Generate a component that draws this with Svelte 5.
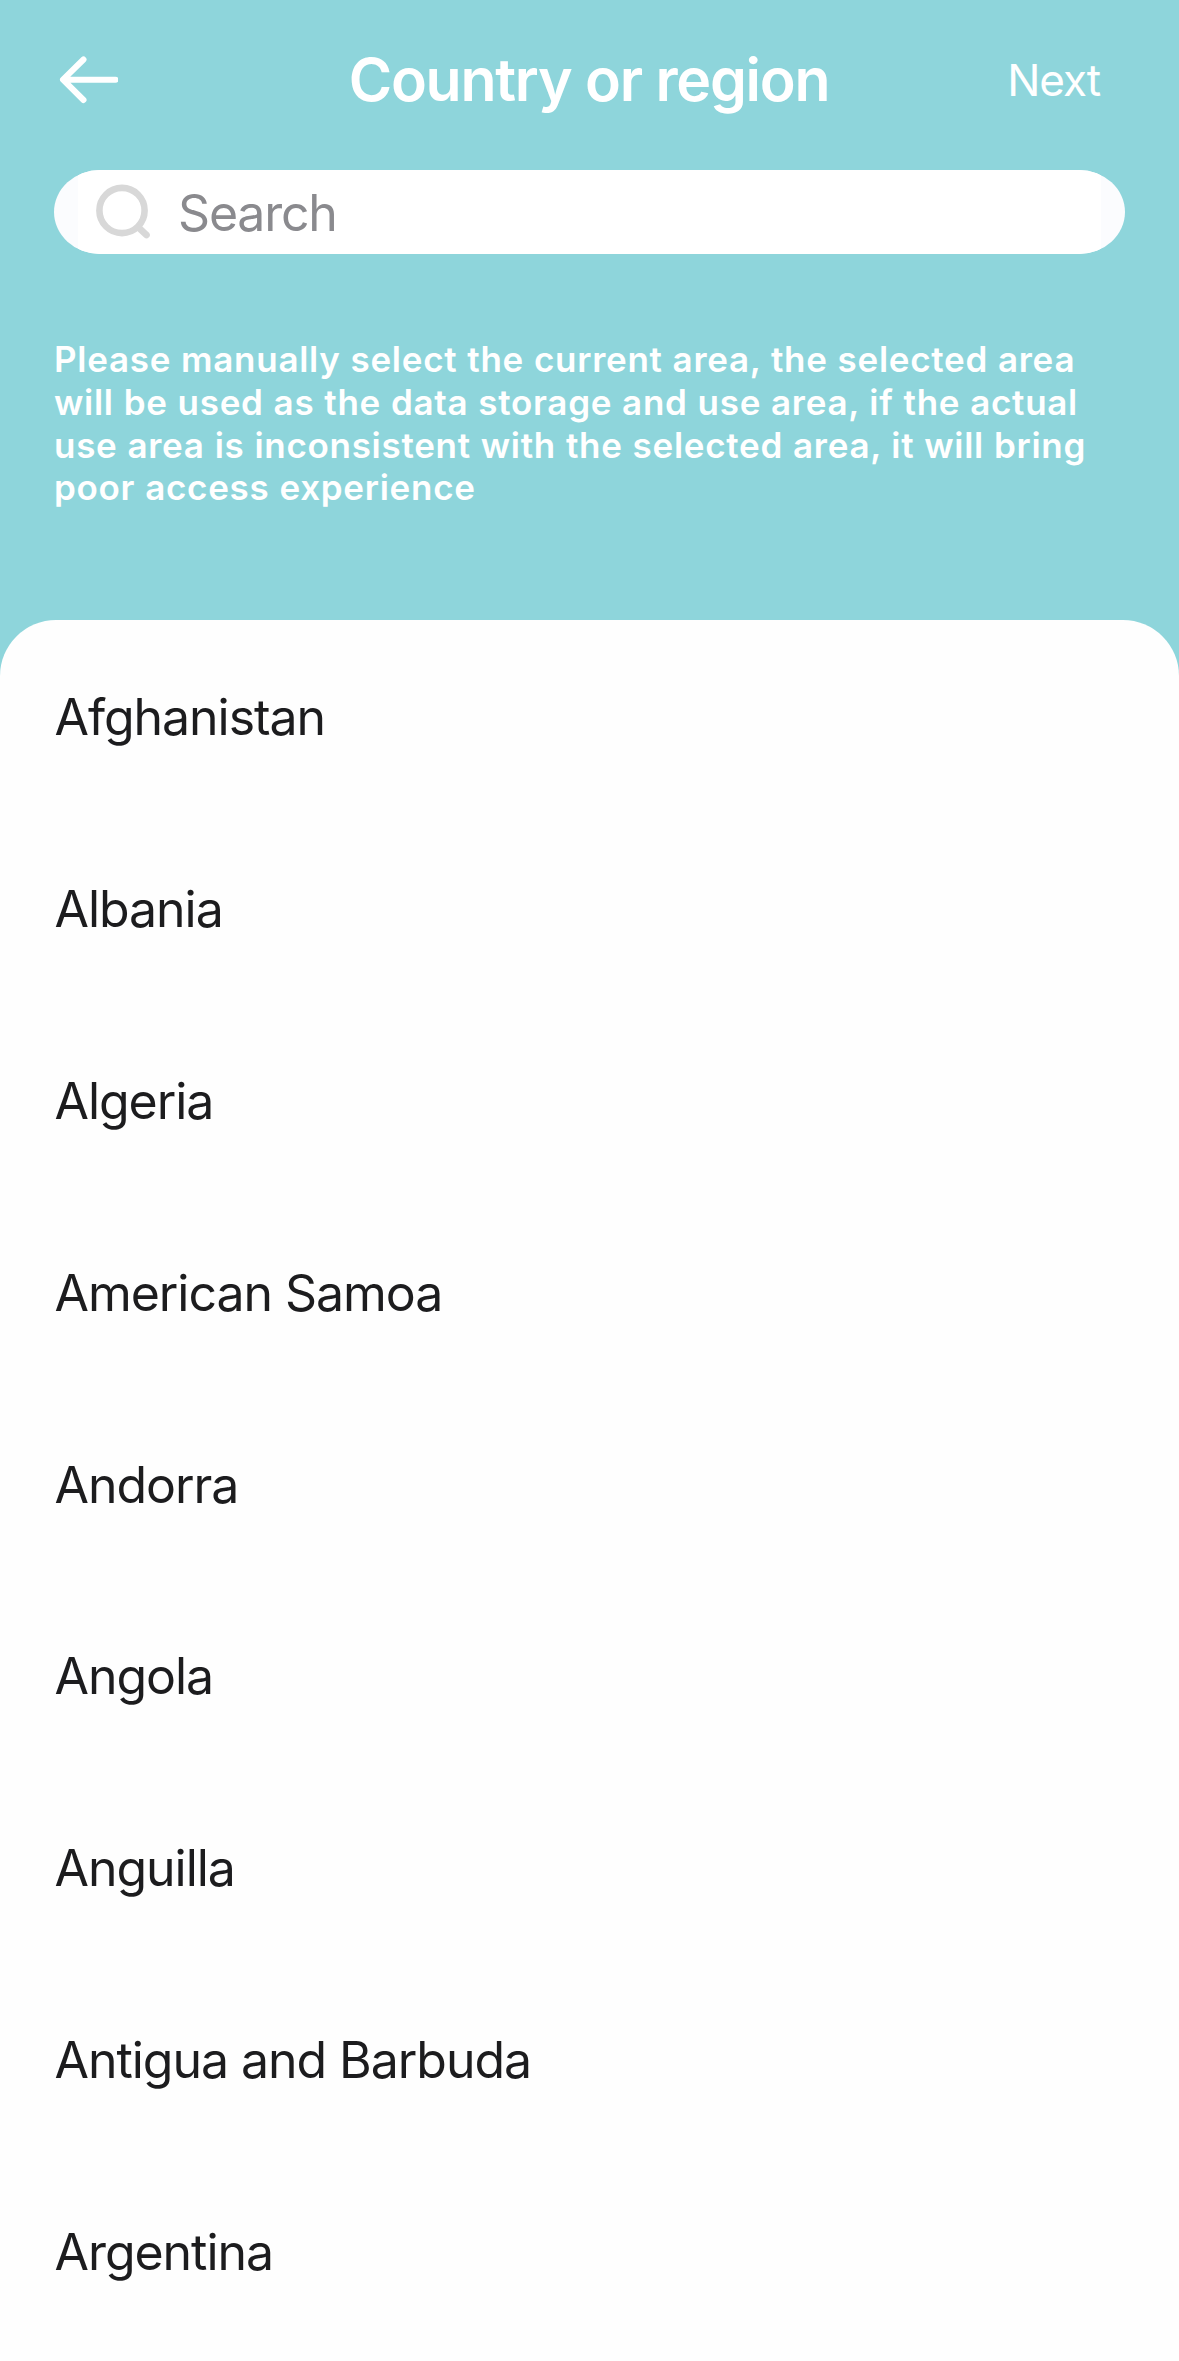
<!-- CountrySelect.svelte -->
<script lang="ts">
  const countries = [
    'Afghanistan',
    'Albania',
    'Algeria',
    'American Samoa',
    'Andorra',
    'Angola',
    'Anguilla',
    'Antigua and Barbuda',
    'Argentina'
  ];

  let search = $state('');
  let selected = $state('');

  const visibleCountries = $derived(
    countries.filter((name) => name.toLowerCase().includes(search.trim().toLowerCase()))
  );
</script>

<div class="screen">
  <header class="header">
    <div class="nav">
      <button class="back" aria-label="Back">
        <svg width="60" height="48" viewBox="0 0 60 48" fill="none">
          <path
            d="M25.5 3.5L5 23.7L25.5 44M5.5 23.7H57.5"
            stroke="#fff"
            stroke-width="6"
            stroke-linecap="round"
            stroke-linejoin="round"
          />
        </svg>
      </button>
      <h1>Country or region</h1>
      <button class="next">Next</button>
    </div>

    <label class="search">
      <span class="search-field">
        <svg class="search-icon" width="56" height="56" viewBox="0 0 56 56" fill="none">
          <circle cx="27" cy="26.5" r="22.6" stroke="#d8d8d8" stroke-width="6.6" />
          <path d="M43.5 43.5L51.5 51" stroke="#d8d8d8" stroke-width="6.6" stroke-linecap="round" />
        </svg>
        <input type="text" placeholder="Search" bind:value={search} />
      </span>
    </label>

    <p class="notice">
      Please manually select the current area, the selected area will be used as the data storage
      and use area, if the actual use area is inconsistent with the selected area, it will bring
      poor access experience
    </p>
  </header>

  <ul class="list">
    {#each visibleCountries as name}
      <li>
        <button class="row" aria-pressed={selected === name} onclick={() => (selected = name)}>
          {name}
        </button>
      </li>
    {/each}
  </ul>
</div>

<style>
  :global(body) {
    margin: 0;
    background: #fefefe;
  }

  .screen {
    box-sizing: border-box;
    display: flex;
    flex-direction: column;
    height: 2361px;
    overflow: hidden;
    background: #8ed5db;
    font-family: 'Inter', 'Liberation Sans', sans-serif;
  }

  button {
    margin: 0;
    padding: 0;
    border: none;
    background: none;
    color: inherit;
    font: inherit;
    cursor: pointer;
  }

  .header {
    flex: none;
    box-sizing: border-box;
    height: 620.4px;
    padding: 0 54px;
    color: #fff;
  }

  .nav {
    display: grid;
    grid-template-columns: 1fr auto 1fr;
    align-items: center;
    height: 159px;
    padding: 0 25px 0 4px;
    margin-bottom: 11px;
  }

  .back {
    display: flex;
    justify-self: start;
  }

  h1 {
    margin: 0 0 0 20px;
    font-size: 59px;
    font-weight: 600;
    line-height: 72px;
    letter-spacing: -1.26px;
  }

  .next {
    justify-self: end;
    font-size: 44px;
    line-height: 54px;
    letter-spacing: -1.1px;
  }

  .search {
    display: block;
    box-sizing: border-box;
    height: 84px;
    padding: 0 24px;
    overflow: hidden;
    border-radius: 46px / 42px;
    background: #fbfcfe;
  }

  .search-field {
    display: flex;
    align-items: center;
    height: 84px;
    padding-left: 17px;
    background: #fff;
  }

  .search-icon {
    flex: none;
    margin-right: 27px;
  }

  input {
    flex: 1;
    min-width: 0;
    height: 60px;
    margin: 0;
    padding: 1px 0 0;
    border: none;
    outline: none;
    background: none;
    color: #1c1c1e;
    font-family: inherit;
    font-size: 50px;
    letter-spacing: -1.2px;
  }

  input::placeholder {
    color: #8a8a8e;
    opacity: 1;
  }

  .notice {
    width: 1060px;
    margin: 84px 0 0;
    font-size: 35px;
    font-weight: 600;
    line-height: 42.8px;
    letter-spacing: 0.72px;
    word-spacing: 0.4px;
  }

  .list {
    flex: 1;
    margin: 0;
    padding: 2px 0 0;
    border-radius: 56px 56px 0 0;
    background: #fefefe;
    list-style: none;
  }

  .row {
    display: block;
    width: 100%;
    height: 191.8px;
    padding: 0 54.5px;
    color: #1c1c1e;
    font-size: 50px;
    line-height: 191.8px;
    letter-spacing: -1.05px;
    text-align: left;
  }
</style>
